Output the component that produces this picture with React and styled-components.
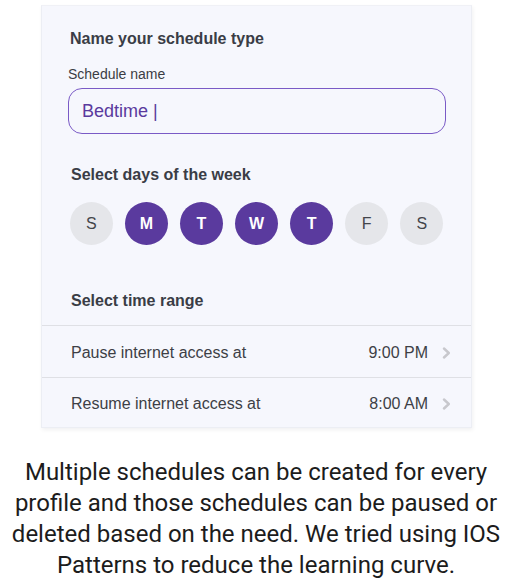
import React from 'react';
import styled, { createGlobalStyle } from 'styled-components';

const GlobalStyle = createGlobalStyle`
  html, body {
    margin: 0;
    padding: 0;
    background: #ffffff;
  }
  * { box-sizing: border-box; }
`;

const Page = styled.div`
  width: 512px;
  height: 582px;
  overflow: hidden;
  display: flex;
  flex-direction: column;
  align-items: flex-start;
  padding-top: 5px;
`;

const Card = styled.section`
  margin-left: 41px;
  width: 431px;
  background: #f6f7fd;
  border: 1px solid #eceef4;
  border-top-color: #f0f1f6;
  box-shadow: 1px 2px 4px rgba(20, 24, 40, 0.06);
  font-family: "Liberation Sans", Arial, sans-serif;
  color: #3a3d45;
`;

const Section = styled.div`
  padding: ${(p) => p.$pad || '0 28px'};
`;

const Heading = styled.h3`
  margin: 0;
  font-size: 16px;
  line-height: 18px;
  font-weight: 700;
  color: #3a3d46;
  padding-left: ${(p) => p.$indent || 0}px;
`;

const FieldLabel = styled.label`
  display: block;
  font-size: 14px;
  line-height: 16px;
  color: #3b3d44;
  margin: 18px 0 6px -2px;
`;

const NameInput = styled.div`
  margin-left: -2px;
  width: 378px;
  height: 46px;
  border: 1.5px solid #7a5ac6;
  border-radius: 14px;
  display: flex;
  align-items: center;
  padding-left: 13px;
  font-size: 18px;
  color: #5a3a9e;
`;

const DayRow = styled.div`
  display: flex;
  gap: 12.5px;
  margin-top: 18px;
`;

const Day = styled.div`
  width: 43px;
  height: 43px;
  border-radius: 50%;
  display: flex;
  align-items: center;
  justify-content: center;
  font-size: 16px;
  font-weight: ${(p) => (p.$on ? 700 : 400)};
  background: ${(p) => (p.$on ? '#5a3a9e' : '#e5e6ea')};
  color: ${(p) => (p.$on ? '#ffffff' : '#43454b')};
`;

const TimeRow = styled.div`
  display: flex;
  align-items: center;
  height: ${(p) => p.$h}px;
  border-top: 1px solid #dfe0e5;
  padding: 2px 20px 0 29px;
  font-size: 16px;
  color: #3d3f46;
`;

const RowLabel = styled.span`
  flex: 1;
`;

const RowValue = styled.span`
  margin-right: 14px;
`;

const Caption = styled.p`
  margin: 29px 0 0;
  width: 512px;
  padding: 0 4px;
  text-align: center;
  font-family: Roboto, "Noto Sans", sans-serif;
  font-size: 24px;
  line-height: 31px;
  color: #1c1c1c;
`;

const Chevron = () => (
  <svg width="9" height="12" viewBox="0 0 9 12" fill="none">
    <path d="M2 1.5L6.8 6L2 10.5" stroke="#c8c8cd" strokeWidth="2.4" strokeLinecap="round" strokeLinejoin="round" />
  </svg>
);

const days = [
  { d: 'S', on: false },
  { d: 'M', on: true },
  { d: 'T', on: true },
  { d: 'W', on: true },
  { d: 'T', on: true },
  { d: 'F', on: false },
  { d: 'S', on: false },
];

const times = [
  { label: 'Pause internet access at', value: '9:00 PM', h: 52 },
  { label: 'Resume internet access at', value: '8:00 AM', h: 50 },
];

export default function App() {
  return (
    <Page>
      <GlobalStyle />
      <Card>
        <Section $pad="24px 28px 0 28px">
          <Heading>Name your schedule type</Heading>
          <FieldLabel>Schedule name</FieldLabel>
          <NameInput>Bedtime |</NameInput>
        </Section>
        <Section $pad="32px 28px 0 28px">
          <Heading $indent={1}>Select days of the week</Heading>
          <DayRow>
            {days.map((x, i) => (
              <Day key={i} $on={x.on}>{x.d}</Day>
            ))}
          </DayRow>
        </Section>
        <Section $pad="47px 28px 15px 28px">
          <Heading $indent={1}>Select time range</Heading>
        </Section>
        {times.map((t) => (
          <TimeRow key={t.label} $h={t.h}>
            <RowLabel>{t.label}</RowLabel>
            <RowValue>{t.value}</RowValue>
            <Chevron />
          </TimeRow>
        ))}
      </Card>
      <Caption>
        Multiple schedules can be created for every profile and those schedules can be paused or deleted based on the need. We tried using IOS Patterns to reduce the learning curve.
      </Caption>
    </Page>
  );
}
